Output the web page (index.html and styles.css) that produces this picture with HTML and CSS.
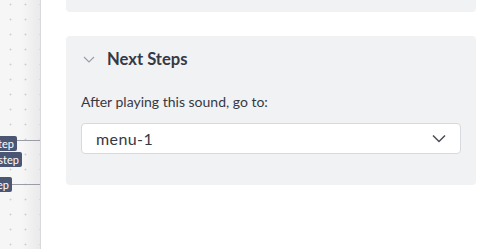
FILE: index.html
```html
<!DOCTYPE html>
<html>
<head>
<meta charset="utf-8">
<link rel="stylesheet" href="styles.css">
</head>
<body>
<div class="app">
  <div class="canvas">
    <div class="node n1">step</div>
    <div class="link l1"></div>
    <div class="node n2">step</div>
    <div class="node n3">step</div>
    <div class="link l3"></div>
  </div>
  <div class="panel">
    <div class="card card-top"></div>
    <div class="card">
      <div class="card-head">
        <svg class="chev" width="12" height="7" viewBox="0 0 12 7"><path d="M1 1l5 5 5-5" fill="none" stroke="#9a9ea8" stroke-width="1.2"/></svg>
        <span class="title">Next Steps</span>
      </div>
      <div class="field-label">After playing this sound, go to:</div>
      <div class="select">
        <span class="value">menu-1</span>
        <svg width="14" height="9" viewBox="0 0 14 9"><path d="M1 1.5l6 6 6-6" fill="none" stroke="#4a4d55" stroke-width="1.5"/></svg>
      </div>
    </div>
  </div>
</div>
</body>
</html>
```
FILE: styles.css
```css
html, body { margin: 0; padding: 0; background: #fff; }
body { font-family: Lato, "Open Sans", sans-serif; color: #353944; }
.app { display: flex; width: 500px; height: 249px; overflow: hidden; }
.canvas {
  position: relative;
  width: 40px;
  flex: none;
  border-right: 1px solid #d9dadd;
  background-color: #f6f6f7;
  background-image:
    linear-gradient(to right, rgba(0,0,0,0) 22px, rgba(0,0,0,0.05) 40px),
    radial-gradient(circle, #cfd1d5 0.8px, transparent 1.2px);
  background-size: 100% 100%, 15px 15px;
  background-position: 0 0, 3px -3px;
}
.node {
  position: absolute;
  background: #4b5674;
  color: #fff;
  font-size: 11px;
  line-height: 13px;
  padding: 1px 3px;
  border-radius: 2px;
}
.n1 { top: 136px; right: 23px; }
.n2 { top: 152px; right: 18px; height: 13px; padding-top: 1px; padding-bottom: 1px; }
.n3 { top: 177px; right: 28px; }
.link { position: absolute; height: 1px; background: #9a9da5; right: 0; }
.l1 { top: 140px; left: 17px; }
.l3 { top: 184px; left: 12px; }
.panel {
  flex: 1;
  padding: 0 24px 0 25px;
  display: flex;
  flex-direction: column;
  gap: 24px;
}
.card {
  background: #f1f2f4;
  border-radius: 4px;
  padding: 0 15px 31px;
}
.card-top { height: 12px; border-radius: 0 0 4px 4px; padding: 0; }
.card-head {
  display: flex;
  align-items: center;
  height: 46px;
  padding-left: 2px;
}
.chev { margin-right: 12px; }
.title { font-weight: 700; font-size: 16.6px; color: #353944; }
.field-label { font-size: 14px; margin-top: 10px; line-height: 20px; }
.select {
  margin-top: 11px;
  height: 29px;
  background: #fff;
  border: 1px solid #d7d9de;
  border-radius: 4px;
  display: flex;
  align-items: center;
  justify-content: space-between;
  padding: 0 14px 0 14px;
  font-size: 16px;
}
.value { letter-spacing: 0.4px; }
```
